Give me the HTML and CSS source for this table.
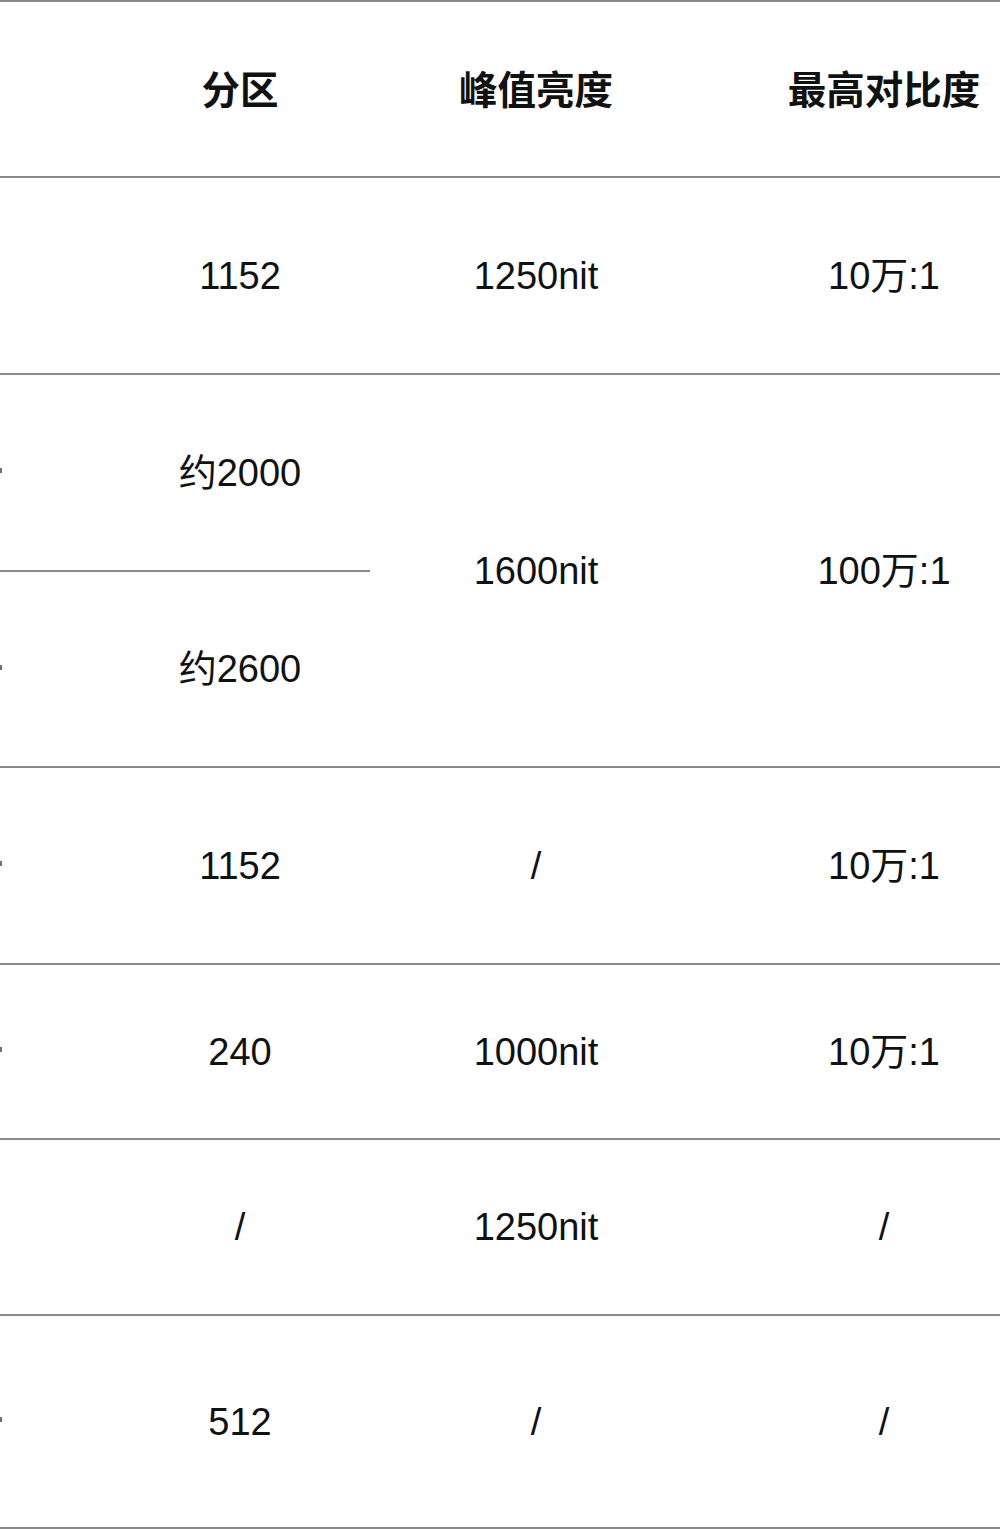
FILE: index.html
```html
<!DOCTYPE html>
<html lang="zh-CN">
<head>
<meta charset="utf-8">
<title>分区对比</title>
<link rel="stylesheet" href="styles.css">
</head>
<body>
<div class="viewport">
  <div class="grid">
    <div class="cell edge"></div>
    <div class="cell head">分区</div>
    <div class="cell head">峰值亮度</div>
    <div class="cell head">最高对比度</div>

    <div class="cell edge"></div>
    <div class="cell">1152</div>
    <div class="cell">1250nit</div>
    <div class="cell">10万:1</div>

    <div class="cell edge"><span class="mark"></span></div>
    <div class="cell">约2000</div>
    <div class="cell span2">1600nit</div>
    <div class="cell span2">100万:1</div>
    <div class="cell edge"><span class="mark"></span></div>
    <div class="cell">约2600</div>

    <div class="cell edge"><span class="mark"></span></div>
    <div class="cell">1152</div>
    <div class="cell">/</div>
    <div class="cell">10万:1</div>

    <div class="cell edge"><span class="mark"></span></div>
    <div class="cell">240</div>
    <div class="cell">1000nit</div>
    <div class="cell">10万:1</div>

    <div class="cell edge"></div>
    <div class="cell">/</div>
    <div class="cell">1250nit</div>
    <div class="cell">/</div>

    <div class="cell edge"><span class="mark"></span></div>
    <div class="cell">512</div>
    <div class="cell">/</div>
    <div class="cell">/</div>
  </div>
</div>
</body>
</html>
```

FILE: styles.css
```css
html, body {
  margin: 0;
  padding: 0;
  background: #ffffff;
}

.viewport {
  width: 1000px;
  height: 1529px;
  overflow: hidden;
}

.grid {
  width: 1066px;
  display: grid;
  grid-template-columns: 110px 260px 332px 364px;
  grid-template-rows: 176px 197px 197px 196px 197px 175px 176px 213px;
  border-top: 2px solid #8a8a8a;
  font-family: "Liberation Sans", Arial, "Noto Sans CJK SC", sans-serif;
  font-size: 38px;
  line-height: 1;
  color: #111111;
}

.cell {
  display: flex;
  align-items: center;
  justify-content: center;
  border-bottom: 2px solid #8a8a8a;
  box-sizing: border-box;
  white-space: nowrap;
}

.head {
  font-family: "Noto Sans CJK SC", "Liberation Sans", sans-serif;
  font-weight: 700;
  font-size: 38.5px;
  padding-bottom: 4px;
}

.edge {
  justify-content: flex-start;
  padding-bottom: 0;
}

.mark {
  display: block;
  width: 2px;
  height: 5px;
  background: #707070;
  margin-top: -4px;
}

.span2 {
  grid-row: span 2;
}
```
